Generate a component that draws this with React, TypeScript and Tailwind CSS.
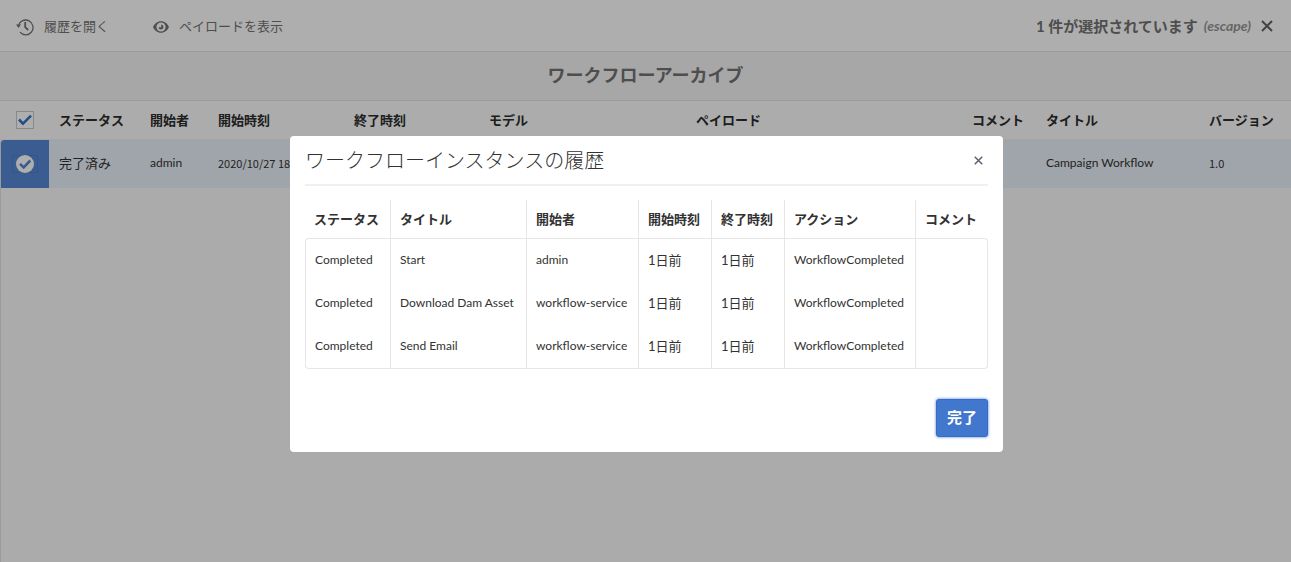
import React from "react";

const archiveColumns = [
  { label: "ステータス", value: "完了済み", width: "w-[91px]", text: "" },
  { label: "開始者", value: "admin", width: "w-[68px]", text: "text-xs" },
  { label: "開始時刻", value: "2020/10/27 18", width: "w-[136px]", text: "font-['Noto_Sans_CJK_JP',sans-serif] text-[11px]" },
  { label: "終了時刻", value: "", width: "w-[135px]", text: "" },
  { label: "モデル", value: "", width: "w-[207px]", text: "" },
  { label: "ペイロード", value: "", width: "w-[276px]", text: "" },
  { label: "コメント", value: "", width: "w-[74px]", text: "" },
  { label: "タイトル", value: "Campaign Workflow", width: "w-[163px]", text: "text-xs" },
  { label: "バージョン", value: "1.0", width: "w-[92px]", text: "font-['Noto_Sans_CJK_JP',sans-serif] text-[11px]" },
];

const historyColumns = [
  { label: "ステータス", width: "w-[86px]", text: "text-xs" },
  { label: "タイトル", width: "w-[136px]", text: "text-xs" },
  { label: "開始者", width: "w-[112px]", text: "text-xs" },
  { label: "開始時刻", width: "w-[73px]", text: "text-[13px]" },
  { label: "終了時刻", width: "w-[73px]", text: "text-[13px]" },
  { label: "アクション", width: "w-[131px]", text: "text-xs" },
  { label: "コメント", width: "w-[72px]", text: "text-[13px]" },
];

const historyRows = [
  ["Completed", "Start", "admin", "1日前", "1日前", "WorkflowCompleted", ""],
  ["Completed", "Download Dam Asset", "workflow-service", "1日前", "1日前", "WorkflowCompleted", ""],
  ["Completed", "Send Email", "workflow-service", "1日前", "1日前", "WorkflowCompleted", ""],
];

function HistoryIcon() {
  return (
    <svg viewBox="0 0 18 18" className="mt-0.5 h-[18px] w-[18px]" fill="none" aria-hidden="true">
      <path d="M2.500 7.500A7.400 7.400 0 1 1 4 14.200" stroke="currentColor" strokeWidth="1.3" />
      <path d="M0 6.500h5L2.500 10z" fill="currentColor" />
      <path d="M9.200 4v5.200l3 2.800" stroke="currentColor" strokeWidth="1.800" />
    </svg>
  );
}

function EyeIcon() {
  return (
    <svg viewBox="0 0 16 12" className="mt-0.5 h-3 w-4" fill="none" aria-hidden="true">
      <path
        fill="currentColor"
        fillRule="evenodd"
        d="M8 .2C4.200.2 1.400 2.900 0 6c1.400 3.100 4.200 5.800 8 5.800s6.600-2.700 8-5.800C14.600 2.900 11.800.2 8 .2zM8 1.400a4.600 4.600 0 1 1 0 9.200 4.600 4.600 0 0 1 0-9.200z"
      />
      <path fill="currentColor" d="M8.200 3.500a2.500 2.500 0 1 1-2.700 2.800h2.700z" />
    </svg>
  );
}

function Cross({ className }: { className: string }) {
  return (
    <svg viewBox="0 0 12 12" className={className} fill="none" aria-hidden="true">
      <path d="M1 1l10 10M11 1L1 11" stroke="currentColor" strokeWidth="2" />
    </svg>
  );
}

export default function App() {
  return (
    <div className="flex min-h-screen flex-col bg-[#f5f5f5] font-[Lato,'Noto_Sans_CJK_JP',sans-serif] text-[13px] leading-5 text-[#323232]">
      <header className="flex h-[52px] items-center border-b border-[#dedede] bg-[#fafafa] px-4 text-[#707070]">
        <button type="button" className="mr-11 flex items-center gap-2.5">
          <HistoryIcon />
          <span>履歴を開く</span>
        </button>
        <button type="button" className="flex items-center gap-2.5">
          <EyeIcon />
          <span>ペイロードを表示</span>
        </button>
        <div className="ml-auto flex items-center gap-1.5 text-[15px]">
          <b>1 件が選択されています</b>
          <i className="text-sm font-bold text-[#929292]">(escape)</i>
          <button type="button" aria-label="選択を解除" className="ml-0.5 flex p-0.5 text-[#606060]">
            <Cross className="h-3 w-3" />
          </button>
        </div>
      </header>

      <div className="flex h-[49px] items-center justify-center border-b border-[#dedede] bg-[#f0f0f0] pb-0.5">
        <h1 className="text-lg font-bold text-[#707070]">ワークフローアーカイブ</h1>
      </div>

      <table className="w-full table-fixed border-separate border-spacing-0 text-left">
        <thead>
          <tr className="h-[39px] bg-[#f7f7f7] text-[#2b2b2b]">
            <th className="w-[49px] border-b border-[#ececec] p-0">
              <label className="ml-4 grid w-[18px]">
                <input
                  type="checkbox"
                  defaultChecked
                  aria-label="すべて選択"
                  className="h-[18px] w-[18px] appearance-none border border-[#c4c4c4] bg-[#fafafa] [grid-area:1/1]"
                />
                <svg viewBox="0 0 18 18" className="pointer-events-none h-[18px] w-[18px] [grid-area:1/1]" fill="none" aria-hidden="true">
                  <path d="M3 8.500l4 4.200 8-8" stroke="#3a6fc2" strokeWidth="2.600" />
                </svg>
              </label>
            </th>
            {archiveColumns.map((c) => (
              <th key={c.label} className={`${c.width} border-b border-[#ececec] px-2.5 py-0 font-bold whitespace-nowrap`}>
                {c.label}
              </th>
            ))}
          </tr>
        </thead>
        <tbody>
          <tr className="h-12 bg-[#e6ecf5]">
            <td className="rounded-tl border-l border-[#dedede] bg-[#5485d0] p-0">
              <label className="ml-[11px] grid w-[26px]">
                <input
                  type="checkbox"
                  defaultChecked
                  aria-label="行を選択"
                  className="h-[18px] w-[26px] appearance-none border border-[#4e7cc2] [grid-area:1/1]"
                />
                <svg viewBox="0 0 26 18" className="pointer-events-none h-[18px] w-[26px] [grid-area:1/1]" fill="none" aria-hidden="true">
                  <circle cx="13" cy="9" r="9" fill="#fafafa" />
                  <path d="M8 8.800l3.700 3.700 6.600-7" stroke="#5485d0" strokeWidth="2.600" />
                </svg>
              </label>
            </td>
            {archiveColumns.map((c) => (
              <td key={c.label} className={`${c.text} px-2.5 pt-0 pb-0.5 whitespace-nowrap`}>
                {c.value}
              </td>
            ))}
          </tr>
        </tbody>
      </table>
      <div className="flex-1 border-l border-[#dedede]" />

      <div className="fixed inset-0 flex items-start justify-center bg-black/30 pt-[136px] pl-0.5">
        <section role="dialog" aria-labelledby="history-title" className="rounded bg-white px-[15px] pb-[15px]">
          <div className="flex h-[50px] items-center justify-between border-b-2 border-[#f0f0f0]">
            <h2 id="history-title" className="font-['Noto_Sans_CJK_JP',sans-serif] text-xl font-light">
              ワークフローインスタンスの履歴
            </h2>
            <button type="button" aria-label="閉じる" className="flex p-[5px] text-[#606070]">
              <Cross className="h-[9px] w-[9px]" />
            </button>
          </div>

          <table className="mt-3.5 w-[683px] table-fixed border-separate border-spacing-0 text-left">
            <thead>
              <tr className="h-[38px]">
                {historyColumns.map((c) => (
                  <th
                    key={c.label}
                    className={`${c.width} border-r border-[#e6e6e6] py-0 pr-0 pl-[9px] font-bold whitespace-nowrap last:border-r-0`}
                  >
                    {c.label}
                  </th>
                ))}
              </tr>
            </thead>
            <tbody className="[&>tr:first-child>td]:border-t [&>tr:first-child>td:first-child]:rounded-tl [&>tr:first-child>td:last-child]:rounded-tr [&>tr:last-child>td]:border-b [&>tr:last-child>td:first-child]:rounded-bl [&>tr:last-child>td:last-child]:rounded-br">
              {historyRows.map((row) => (
                <tr key={row[1]} className="h-[43px] first:h-11 last:h-11">
                  {row.map((cell, i) => (
                    <td
                      key={i}
                      className={`${historyColumns[i].text} border-r border-[#e6e6e6] pt-0 pr-0 pb-0.5 pl-[9px] whitespace-nowrap first:border-l`}
                    >
                      {cell}
                    </td>
                  ))}
                </tr>
              ))}
            </tbody>
          </table>

          <div className="mt-[30px] flex justify-end">
            <button
              type="button"
              className="h-[38px] rounded-[3px] border border-[#326ec8] bg-[#4178cd] px-2.5 pb-0.5 text-[15px] font-bold text-white shadow-[0_0_3px_#4178cd]"
            >
              完了
            </button>
          </div>
        </section>
      </div>
    </div>
  );
}
